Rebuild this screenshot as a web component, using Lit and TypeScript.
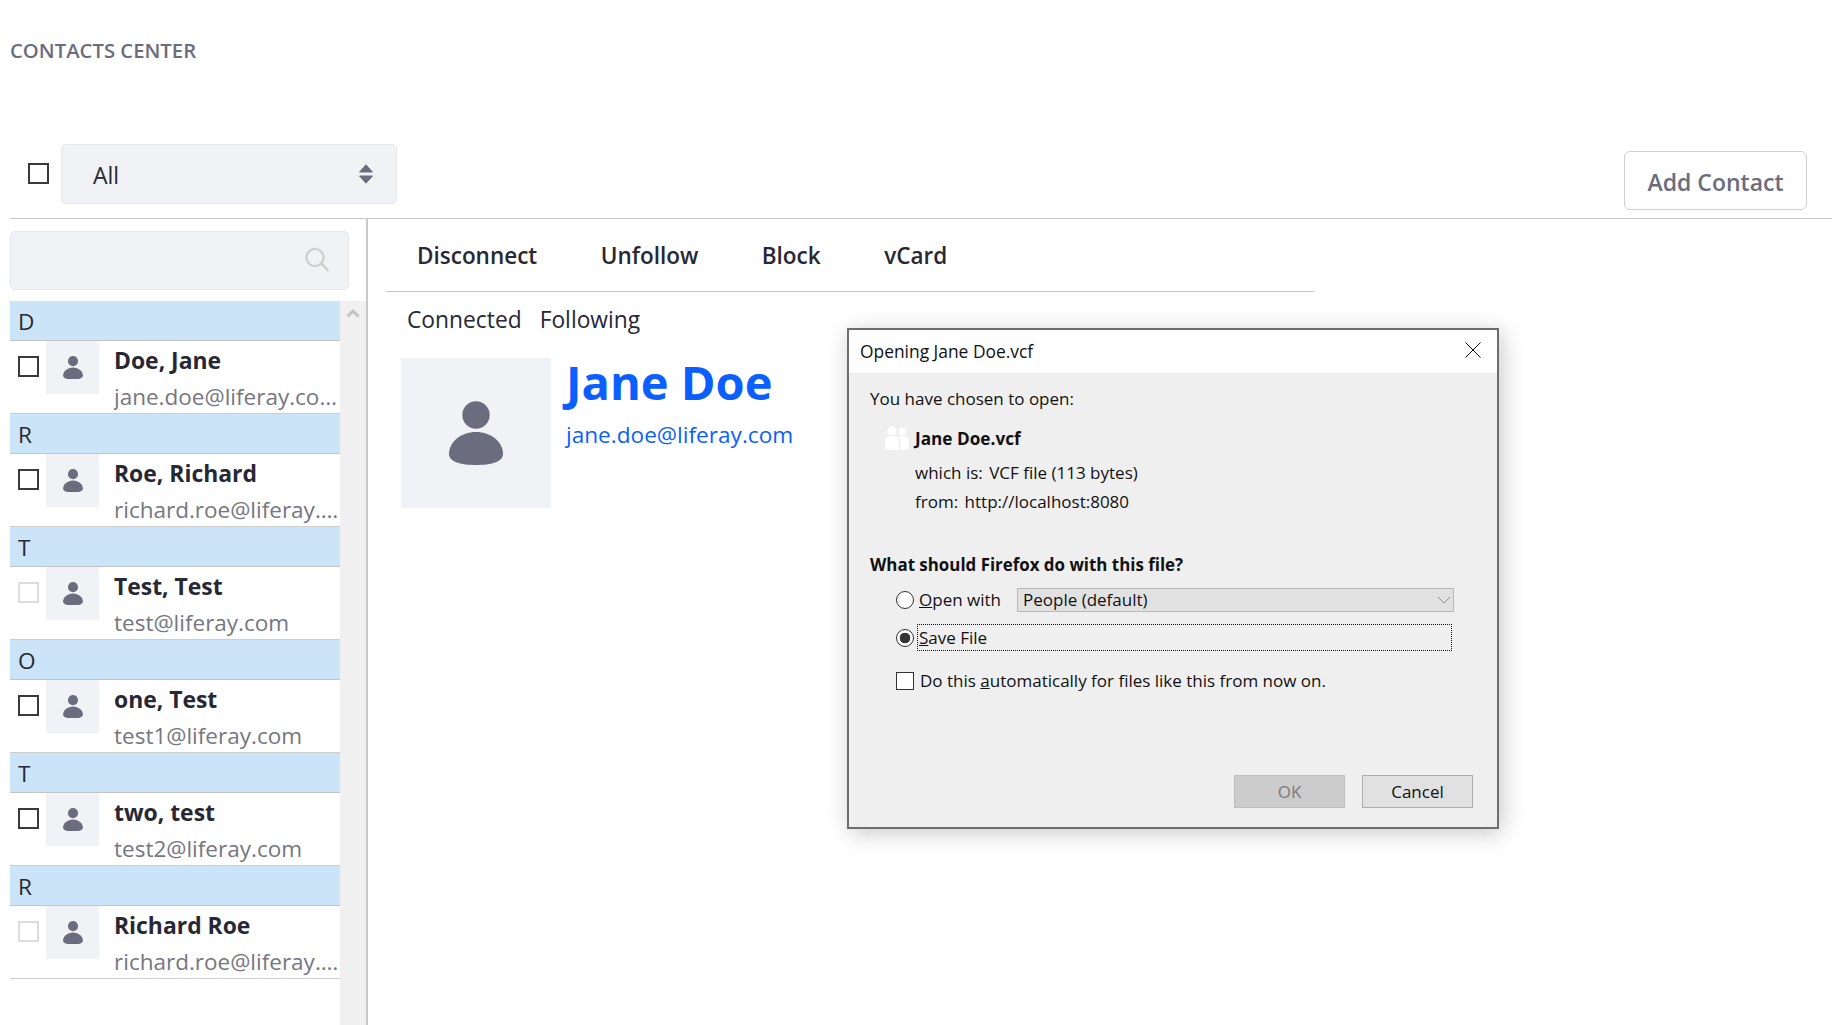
import { LitElement, html, css, svg } from "lit";
import { customElement } from "lit/decorators.js";

interface Contact {
  letter: string;
  name: string;
  email: string;
  faded?: boolean;
}

const contacts: Contact[] = [
  { letter: "D", name: "Doe, Jane", email: "jane.doe@liferay.com" },
  { letter: "R", name: "Roe, Richard", email: "richard.roe@liferay.com" },
  { letter: "T", name: "Test, Test", email: "test@liferay.com", faded: true },
  { letter: "O", name: "one, Test", email: "test1@liferay.com" },
  { letter: "T", name: "two, test", email: "test2@liferay.com" },
  { letter: "R", name: "Richard Roe", email: "richard.roe@liferay.com", faded: true },
];

const person = svg`<path fill="#6b6c7e" d="M75 74C90 74 102 84 102 96C102 104 90 107 75 107C60 107 48 104 48 96C48 84 60 74 75 74Z"/><circle fill="#6b6c7e" cx="75" cy="57" r="13.7"/>`;

@customElement("app-root")
export class AppRoot extends LitElement {
  render() {
    return html`
      <div class="title">CONTACTS CENTER</div>
      <div class="toolbar">
        <span class="check top"></span>
        <div class="select">
          <span>All</span>
          <svg width="14" height="20" viewBox="0 0 14 20">
            <path fill="#6b6c7e" stroke="#6b6c7e" stroke-linejoin="round" d="M7 .8L13.4 8H.6ZM7 19.2L13.4 12H.6Z" />
          </svg>
        </div>
        <button class="add">Add Contact</button>
      </div>
      <div class="content">
        <aside class="side">
          <div class="search">
            <svg width="26" height="26" viewBox="0 0 26 26" fill="none" stroke="#cdcdcd" stroke-width="2.2">
              <circle cx="11" cy="10.5" r="8.6" />
              <path d="M17.5 16.5L24.5 24" />
            </svg>
          </div>
          <div class="list-wrap">
            <div class="list">
              ${contacts.map(
                (c) => html`
                  <div class="letter">${c.letter}</div>
                  <div class="row">
                    <span class="check ${c.faded ? "faded" : ""}"></span>
                    <div class="tile">
                      <svg width="20" height="23.5" viewBox="48 43 54 64">${person}</svg>
                    </div>
                    <div class="info">
                      <div class="name">${c.name}</div>
                      <div class="email">${c.email}</div>
                    </div>
                  </div>
                `
              )}
            </div>
            <div class="scroll">
              <svg width="14" height="10" viewBox="0 0 14 10" fill="none" stroke="#c4c4c4" stroke-width="3">
                <path d="M1.5 8.5L7 3L12.5 8.5" />
              </svg>
            </div>
          </div>
        </aside>
        <main class="main">
          <nav class="actions">
            <span>Disconnect</span>
            <span>Unfollow</span>
            <span>Block</span>
            <span>vCard</span>
          </nav>
          <div class="status"><span>Connected</span><span>Following</span></div>
          <div class="profile">
            <div class="tile big">
              <svg width="54" height="64" viewBox="48 43 54 64">${person}</svg>
            </div>
            <div class="who">
              <div class="big-name">Jane Doe</div>
              <div class="big-mail">jane.doe@liferay.com</div>
            </div>
          </div>
        </main>
      </div>
      ${this.renderDialog()}
    `;
  }

  renderDialog() {
    return html`
      <div class="dialog">
        <div class="dlg-head">
          <span>Opening Jane Doe.vcf</span>
          <svg width="16" height="16" viewBox="0 0 16 16" fill="none" stroke="#111" stroke-width="1">
            <path d="M.5.5L15.5 15.5M15.5.5L.5 15.5" />
          </svg>
        </div>
        <div class="dlg-body">
          <div class="dlg-line chosen">You have chosen to open:</div>
          <div class="file">
            <svg width="25" height="25" viewBox="0 0 25 25" fill="#fff">
              <circle cx="8" cy="5" r="4.5" />
              <circle cx="18.5" cy="5.5" r="3.8" />
              <path d="M1 24V15C1 11 4 10 8 10C12 10 15 11 15 15V24Z" />
              <path d="M16.5 24V14.5C16.5 12.5 15.8 11.2 15 10.3C16 10 17.3 10 18.5 10C22 10 25 11 25 14V22C25 23 24 24 22 24Z" />
            </svg>
            <strong>Jane Doe.vcf</strong>
          </div>
          <div class="dlg-line meta first">which is:<span class="val">VCF file (113 bytes)</span></div>
          <div class="dlg-line meta">from:<span class="val">http://localhost:8080</span></div>
          <div class="dlg-line question">What should Firefox do with this file?</div>
          <div class="option">
            <span class="radio"></span>
            <span class="opt-label"><u>O</u>pen with</span>
            <div class="combo">
              <span>People (default)</span>
              <svg width="14" height="8" viewBox="0 0 14 8" fill="none" stroke="#8a8a8a" stroke-width="1">
                <path d="M1 1L7 7L13 1" />
              </svg>
            </div>
          </div>
          <div class="option save">
            <span class="radio on"></span>
            <span class="focus"><u>S</u>ave File</span>
          </div>
          <div class="option auto">
            <span class="dlg-check"></span>
            <span>Do this <u>a</u>utomatically for files like this from now on.</span>
          </div>
          <div class="buttons">
            <span class="btn off">OK</span>
            <span class="btn">Cancel</span>
          </div>
        </div>
      </div>
    `;
  }

  static styles = css`
    :host {
      display: block;
      position: relative;
      width: 1840px;
      height: 1025px;
      overflow: hidden;
      background: #fff;
      font-family: "Open Sans", "Noto Sans", sans-serif;
      color: #272833;
    }
    .title {
      height: 144px;
      box-sizing: border-box;
      padding: 37px 0 0 10px;
      font-size: 20.3px;
      line-height: 26px;
      font-weight: 600;
      color: #6b6c7e;
    }
    .toolbar {
      display: flex;
      align-items: flex-start;
      height: 75px;
      box-sizing: border-box;
      margin: 0 8px 0 10px;
      padding-left: 18px;
      border-bottom: 1px solid #c8c8c8;
    }
    .check {
      flex: none;
      display: block;
      width: 21px;
      height: 21px;
      box-sizing: border-box;
      border: 2px solid #3a3a3a;
      background: #fff;
    }
    .check.faded {
      border-color: #dcdcdc;
    }
    .check.top {
      margin: 19px 12px 0 0;
    }
    .select {
      width: 336px;
      height: 60px;
      box-sizing: border-box;
      display: flex;
      align-items: center;
      justify-content: space-between;
      padding: 2px 23px 0 31px;
      background: #f1f2f5;
      border: 1px solid #e7e7ed;
      border-radius: 5px;
      font-size: 23px;
    }
    .select svg {
      margin-top: -2px;
    }
    .add {
      margin: 7px 25px 0 auto;
      width: 183px;
      height: 59px;
      padding: 3px 0 0;
      background: #fff;
      border: 1px solid #cdced9;
      border-radius: 6px;
      font: 600 23px "Open Sans", sans-serif;
      color: #6b6c7e;
    }
    .content {
      display: flex;
      height: 806px;
    }
    .side {
      flex: none;
      width: 358px;
      margin-left: 10px;
      box-sizing: border-box;
      border-right: 2px solid #c8c8c8;
    }
    .search {
      width: 339px;
      height: 59px;
      box-sizing: border-box;
      margin-top: 12px;
      display: flex;
      align-items: center;
      justify-content: flex-end;
      padding: 0 18px 2px 0;
      background: #f1f2f5;
      border: 1px solid #e7e7ed;
      border-radius: 5px;
    }
    .list-wrap {
      display: flex;
      margin-top: 11px;
      height: 724px;
    }
    .list {
      width: 330px;
      flex: none;
    }
    .scroll {
      flex: 1;
      background: #f0f0f0;
      padding: 7px 0 0 6px;
      box-sizing: border-box;
    }
    .scroll svg {
      display: block;
    }
    .letter {
      height: 40px;
      box-sizing: border-box;
      padding-left: 8px;
      background: #cce4f8;
      border-bottom: 1px solid #c4c4c4;
      font-size: 22.6px;
      line-height: 42px;
    }
    .row {
      display: flex;
      height: 73px;
      box-sizing: border-box;
      border-bottom: 1px solid #cdcdcd;
    }
    .row .check {
      margin: 15px 0 0 8px;
    }
    .tile {
      flex: none;
      display: flex;
      align-items: center;
      justify-content: center;
      width: 53px;
      height: 53px;
      margin-left: 7px;
      background: #f1f2f5;
    }
    .info {
      margin-left: 15px;
      width: 225px;
      min-width: 0;
    }
    .name {
      font-size: 22.9px;
      font-weight: 700;
      line-height: 30px;
      margin-top: 5px;
      white-space: nowrap;
    }
    .email {
      font-size: 22.5px;
      line-height: 30px;
      margin-top: 6px;
      color: #76767f;
      white-space: nowrap;
      overflow: hidden;
      text-overflow: ellipsis;
    }
    .main {
      flex: 1;
      padding-left: 18px;
    }
    .actions {
      display: flex;
      gap: 63.5px;
      width: 928px;
      height: 73px;
      box-sizing: border-box;
      padding: 21px 0 0 31px;
      border-bottom: 1px solid #c8c8c8;
      font-size: 22.5px;
      font-weight: 600;
      line-height: 32px;
    }
    .status {
      display: flex;
      gap: 18px;
      padding: 12px 0 0 21px;
      font-size: 22.8px;
      line-height: 32px;
    }
    .profile {
      display: flex;
      margin: 22px 0 0 15px;
    }
    .tile.big {
      width: 150px;
      height: 150px;
      margin: 0;
    }
    .who {
      margin-left: 15px;
    }
    .big-name {
      margin-top: -4px;
      font-size: 47px;
      font-weight: 700;
      line-height: 56px;
      color: #0b5fff;
    }
    .big-mail {
      margin-top: 9px;
      font-size: 22.6px;
      line-height: 32px;
      color: #0b5fff;
    }
    .dialog {
      position: absolute;
      left: 847px;
      top: 328px;
      width: 652px;
      height: 501px;
      box-sizing: border-box;
      display: flex;
      flex-direction: column;
      border: 2px solid #6d6d6d;
      background: #efefef;
      box-shadow: 3px 4px 22px rgba(0, 0, 0, 0.22);
      font-size: 17px;
      color: #111;
    }
    .dlg-head {
      flex: none;
      display: flex;
      align-items: center;
      justify-content: space-between;
      height: 43px;
      box-sizing: border-box;
      padding: 0 16px 2px 11px;
      background: #fff;
      font-size: 17.4px;
    }
    .dlg-head svg {
      margin-top: -2px;
    }
    .dlg-body {
      flex: 1;
      display: flex;
      flex-direction: column;
      padding: 0 0 19px 21px;
    }
    .dlg-line {
      line-height: 24px;
    }
    .chosen {
      margin-top: 14px;
    }
    .file {
      display: flex;
      align-items: center;
      margin: 15px 0 0 14px;
      height: 25px;
    }
    .file svg {
      flex: none;
      margin-right: 6px;
    }
    .file strong {
      font-size: 17.2px;
      font-weight: 700;
    }
    .meta {
      margin-left: 45px;
    }
    .meta.first {
      margin-top: 10px;
    }
    .meta + .meta {
      margin-top: 5px;
    }
    .val {
      margin-left: 6.5px;
    }
    .question {
      margin-top: 39px;
      font-weight: 700;
      font-size: 16.9px;
    }
    .option {
      flex: none;
      display: flex;
      align-items: center;
      margin-left: 26px;
      height: 27px;
    }
    .question + .option {
      margin-top: 9px;
    }
    .option.save {
      margin-top: 11px;
    }
    .option.auto {
      margin-top: 16px;
    }
    .radio {
      flex: none;
      width: 18px;
      height: 18px;
      box-sizing: border-box;
      border-radius: 50%;
      border: 1.5px solid #333;
      background: #fff;
    }
    .radio.on {
      background: radial-gradient(circle, #333 0 5px, #fff 5.6px);
    }
    .opt-label {
      margin-left: 5px;
      width: 98px;
    }
    .combo {
      display: flex;
      align-items: center;
      justify-content: space-between;
      width: 437px;
      height: 24px;
      box-sizing: border-box;
      padding: 0 2px 0 5px;
      background: #e1e1e1;
      border: 1.5px solid #b8b8b8;
    }
    .focus {
      margin-left: 3px;
      width: 535px;
      height: 27px;
      box-sizing: border-box;
      padding-left: 1px;
      line-height: 25px;
      border: 1px dotted #111;
    }
    .dlg-check {
      flex: none;
      width: 18px;
      height: 18px;
      box-sizing: border-box;
      margin-right: 6px;
      border: 1px solid #333;
      background: #fff;
    }
    .buttons {
      display: flex;
      justify-content: flex-end;
      gap: 17px;
      margin-top: auto;
      padding-right: 24px;
    }
    .btn {
      width: 111px;
      height: 33px;
      box-sizing: border-box;
      display: flex;
      align-items: center;
      justify-content: center;
      background: #e1e1e1;
      border: 1.5px solid #adadad;
    }
    .btn.off {
      background: #ccc;
      border-color: #bfbfbf;
      color: #7a7a7a;
    }
  `;
}
